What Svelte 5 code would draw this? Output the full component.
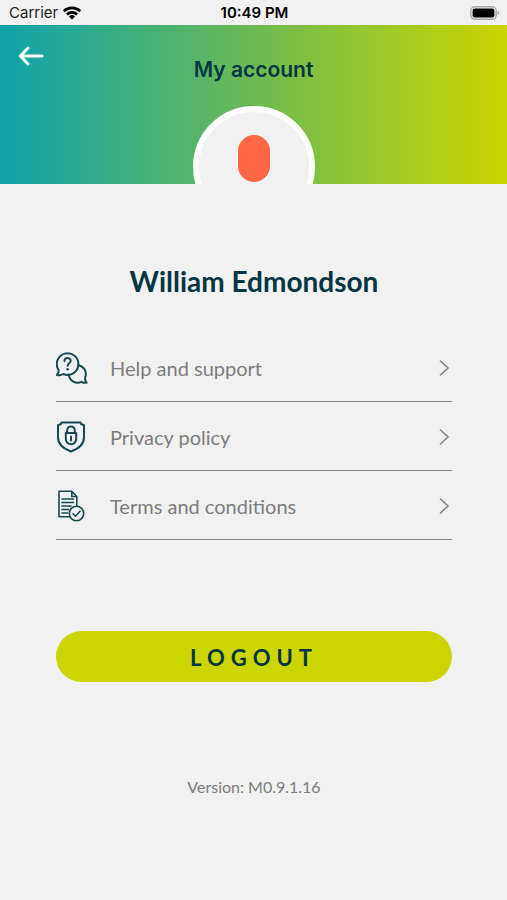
<script lang="ts">
	interface MenuItem {
		id: 'help' | 'privacy' | 'terms';
		label: string;
	}

	const items: MenuItem[] = [
		{ id: 'help', label: 'Help and support' },
		{ id: 'privacy', label: 'Privacy policy' },
		{ id: 'terms', label: 'Terms and conditions' }
	];

	let { name = 'William Edmondson', version = 'M0.9.1.16' } = $props();
</script>

<div class="screen">
	<div class="status-bar">
		<div class="carrier">
			<span>Carrier</span>
			<svg width="20" height="16" viewBox="0 0 20 16" aria-hidden="true">
				<g fill="none" stroke="#000" stroke-width="2.7">
					<path d="M1.8 6.2a11.8 11.8 0 0 1 16.4 0" />
					<path d="M4.9 9.5a7.4 7.4 0 0 1 10.2 0" />
				</g>
				<path d="M10 14.6 6.9 11.5a4.5 4.5 0 0 1 6.2 0z" />
			</svg>
		</div>
		<span class="time">10:49 PM</span>
		<div class="battery">
			<svg width="30" height="14" viewBox="0 0 30 14" aria-hidden="true">
				<rect x="0.8" y="0.8" width="25.4" height="12.4" rx="4" fill="none" stroke="#aaa" stroke-width="1.4" />
				<rect x="2.6" y="2.6" width="21.8" height="8.8" rx="2.2" />
				<path d="M27.6 4.8c1.9.6 1.9 3.8 0 4.4z" fill="#aaa" />
			</svg>
		</div>
	</div>

	<header>
		<button class="back" aria-label="Back">
			<svg width="26" height="20" viewBox="0 0 26 20" fill="none" stroke="#fff" stroke-width="3" stroke-linecap="round" stroke-linejoin="round">
				<path d="M24 10H2.5M10 2 2.5 10l7.5 8" />
			</svg>
		</button>
		<h1>My account</h1>
		<div class="avatar"><span class="avatar-mark"></span></div>
	</header>

	<main>
		<h2>{name}</h2>

		<nav>
			{#each items as item (item.id)}
				<a href="#{item.id}">
					<svg class="icon" viewBox="0 0 32 32" aria-hidden="true">
						{#if item.id === 'help'}
							<path d="M1 23c1.300-1.500 1.900-3.300 1.600-5A10.800 10.800 0 1 1 7.400 22c-1.900 1.100-4.200 1.500-6.400 1z" />
							<path d="M22 13.200a9 9 0 0 1 7.200 12.300c-.4 2 0 3.600 1.400 5.200-2 .4-3.700 0-5.100-.9a9 9 0 0 1-12.800-7.200" />
							<path d="M8.500 9c.1-3.900 6.200-3.800 6.200-.2 0 2.300-3.100 2.500-3.100 5" />
							<circle class="dot" cx="11.600" cy="17.200" r="1.300" />
						{:else if item.id === 'privacy'}
							<path d="M5.500 1.500h19c.3 1.500 1.500 2.500 3.500 2.500v12.500c0 6.500-5 11-13 14-8-3-13-7.500-13-14V4c2 0 3.200-1 3.500-2.500z" />
							<path d="M11.200 12V9.200a3.800 3.800 0 0 1 7.600 0V12M9.800 12h10.400v6a5.200 5.200 0 0 1-10.400 0z" />
							<path d="M15 15.500v4" />
						{:else}
							<g class="thin">
								<path d="M14 26.800H3V1.200h12.800l5 5.300v9.300M15.800 1.200v5.300h5" />
								<path d="M6 9h11.500M6 12.500h11.500M6 16h9M6 19.500h6.500M6 23h5.500" />
								<circle cx="20.500" cy="23.500" r="7.200" />
								<path d="m17 23.700 2.500 2.500 4.500-5" />
							</g>
						{/if}
					</svg>
					<span class="label">{item.label}</span>
					<svg class="chevron" width="12" height="18" viewBox="0 0 12 18" aria-hidden="true">
						<path d="m2 1.500 8 7.500-8 7.500" />
					</svg>
				</a>
			{/each}
		</nav>

		<button class="logout">LOGOUT</button>
		<p class="version">Version: {version}</p>
	</main>
</div>

<style>
	:global(body) {
		margin: 0;
		background: #f1f1f1;
	}
	.screen {
		min-height: 100vh;
		background: #f1f1f1;
		color: #033642;
		font-family: Lato, sans-serif;
	}
	.status-bar {
		display: grid;
		grid-template-columns: 1fr auto 1fr;
		align-items: center;
		box-sizing: border-box;
		height: 25px;
		padding: 1px 7px 0 9px;
		color: #000;
		font-family: Inter, sans-serif;
		font-size: 15px;
		line-height: 24px;
	}
	.carrier {
		display: flex;
		align-items: center;
		gap: 4px;
		color: #222;
	}
	.time {
		font-weight: 600;
	}
	.battery {
		display: flex;
		justify-content: flex-end;
	}
	header {
		position: relative;
		display: flex;
		flex-direction: column;
		align-items: center;
		height: 159px;
		overflow: hidden;
		background: linear-gradient(90deg, #0ea2ab 0%, #6cba53 50%, #cbd500 100%);
	}
	.back {
		position: absolute;
		top: 21px;
		left: 18px;
		padding: 0;
		border: none;
		background: none;
		cursor: pointer;
	}
	.back svg {
		display: block;
	}
	h1 {
		margin: 29px 0 20px;
		font-family: Inter, sans-serif;
		font-size: 21px;
		font-weight: 600;
		line-height: 32px;
	}
	.avatar {
		display: flex;
		flex-shrink: 0;
		justify-content: center;
		box-sizing: border-box;
		width: 122px;
		height: 122px;
		padding-top: 23px;
		border: 6px solid #fff;
		border-radius: 50%;
		background: #f1f1f1;
	}
	.avatar-mark {
		width: 32px;
		height: 47px;
		border-radius: 16px;
		background: #ff6746;
	}
	main {
		padding: 77px 55px 48px 56px;
		text-align: center;
	}
	h2 {
		margin: 0 0 32px;
		font-size: 28px;
		font-weight: 700;
		line-height: 40px;
	}
	nav a {
		display: flex;
		align-items: center;
		gap: 22px;
		box-sizing: border-box;
		height: 69px;
		padding-top: 1px;
		border-bottom: 1px solid #858585;
		color: #7d7d7d;
		font-size: 20px;
		line-height: 24px;
		text-align: left;
		text-decoration: none;
	}
	.label {
		flex: 1;
	}
	.icon {
		width: 32px;
		height: 32px;
		fill: none;
		stroke: #174853;
		stroke-width: 2;
		stroke-linecap: round;
		stroke-linejoin: round;
	}
	.thin {
		stroke-width: 1.6;
	}
	.dot {
		fill: #174853;
		stroke: none;
	}
	.chevron {
		margin-right: 2px;
		fill: none;
		stroke: #858585;
		stroke-width: 1.6;
	}
	.logout {
		display: block;
		width: 100%;
		height: 51px;
		margin: 91px 0;
		padding: 2px 0 0;
		border: none;
		border-radius: 26px;
		background: #cbd500;
		color: #033642;
		font-family: inherit;
		font-size: 22px;
		font-weight: 700;
		letter-spacing: 6px;
		cursor: pointer;
	}
	.version {
		margin: 0;
		color: #7d7d7d;
		font-size: 16px;
		line-height: 28px;
	}
</style>
